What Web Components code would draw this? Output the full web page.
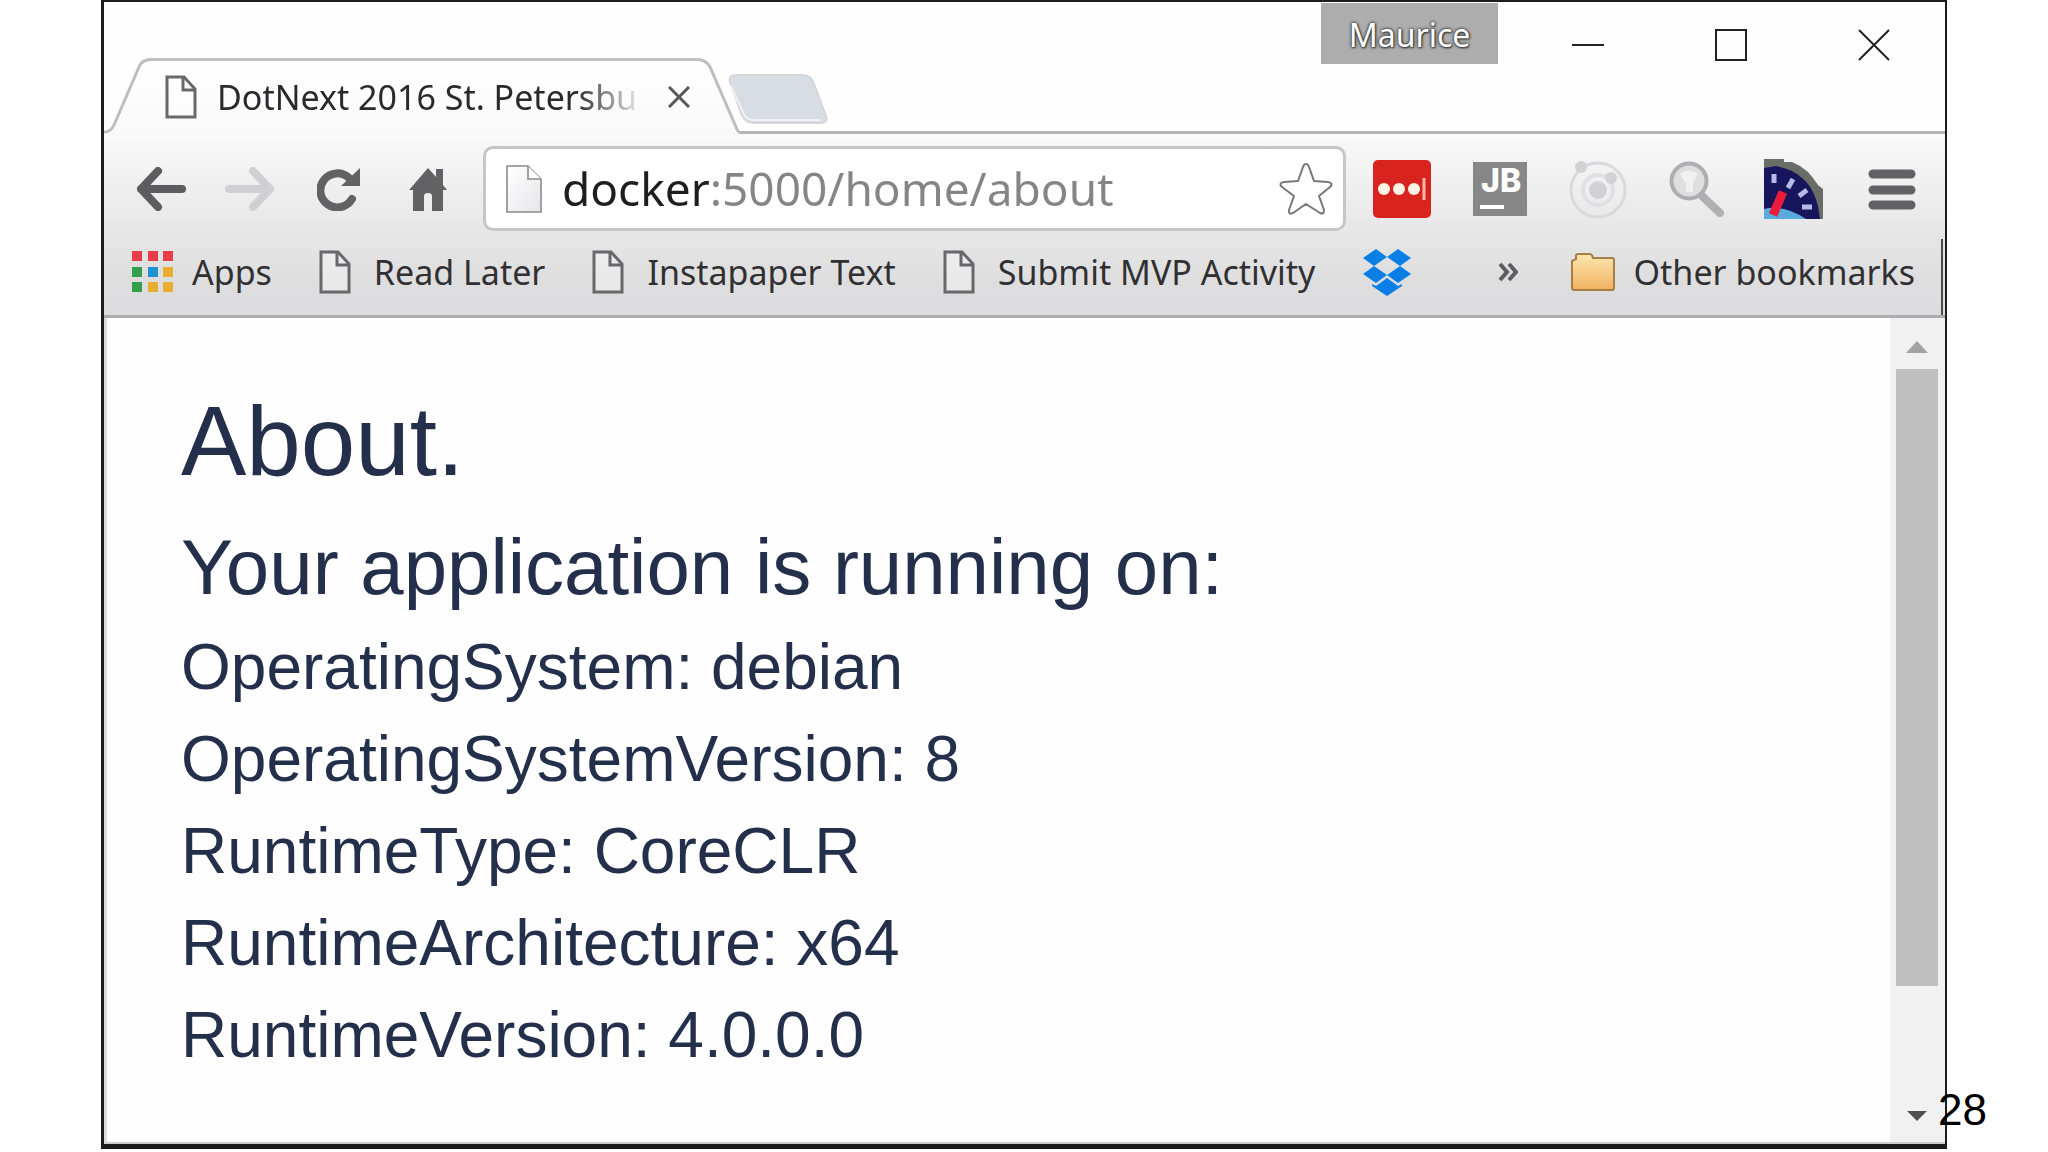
<!DOCTYPE html>
<html lang="en">
<head>
<meta charset="utf-8">
<title>About</title>
<style>
  body { margin: 0; background: #fff; font-family: "Noto Sans", "Open Sans", sans-serif; }
</style>
</head>
<body>
<slide-page number="28">
  <browser-window>
    <tab-strip slot="tabs" user="Maurice">
      <browser-tab>DotNext 2016 St. Petersbu</browser-tab>
    </tab-strip>
    <tool-bar slot="tools" url="docker:5000/home/about"></tool-bar>
    <bookmarks-bar slot="tools">
      <book-mark icon="apps">Apps</book-mark>
      <book-mark icon="page">Read Later</book-mark>
      <book-mark icon="page">Instapaper Text</book-mark>
      <book-mark icon="page">Submit MVP Activity</book-mark>
      <book-mark icon="dropbox" label="Dropbox"></book-mark>
      <book-mark slot="end" icon="folder">Other bookmarks</book-mark>
    </bookmarks-bar>
    <about-page></about-page>
    <scroll-track slot="scroll"></scroll-track>
  </browser-window>
</slide-page>

<script>
const ICONS = {
  page: [32, 44, '<path d="M2 2H19L30 14V42H2Z" fill="#fff" fill-opacity=".35" stroke="#68676b" stroke-width="3"/><path d="M18 2V15H30" fill="none" stroke="#68676b" stroke-width="3"/>'],
  blank: [36, 48, '<defs><linearGradient id="g" x1="0" y1="0" x2="1" y2="1"><stop offset="0" stop-color="#fff"/><stop offset="1" stop-color="#e6e6ea"/></linearGradient></defs><path d="M1 1H22L35 14V47H1Z" fill="url(#g)" stroke="#8b8b8f" stroke-width="1.6"/><path d="M22 1V14H35" fill="#fff" stroke="#8b8b8f" stroke-width="1.6"/>'],
  back: [50, 44, '<path d="M5 22H46M22 4L5 22L22 40" fill="none" stroke="#5d5d5f" stroke-width="8" stroke-linecap="round" stroke-linejoin="round"/>'],
  forward: [50, 44, '<path d="M4 22H45M28 4L45 22L28 40" fill="none" stroke="#d0d0d2" stroke-width="8" stroke-linecap="round" stroke-linejoin="round"/>'],
  reload: [44, 44, '<path d="M35 32A17 17 0 1 1 32 11" fill="none" stroke="#626264" stroke-width="8" stroke-linecap="round"/><path d="M43 1V19H24Z" fill="#626264"/>'],
  home: [38, 44, '<path d="M0 23L19 1L27 10V2H34V18L38 23H34V44H23V29Q23 26 19 26Q15 26 15 29V44H4V23Z" fill="#626264"/>'],
  star: [56, 56, '<path d="M28 3Q30 3 31 6L36 20L50 21Q56 22 52 26L41 35L46 49Q46 54 42 52L28 43L15 52Q10 54 11 49L16 35L4 26Q0 22 6 21L20 20L25 6Q26 3 28 3Z" fill="#fff" stroke="#77777a" stroke-width="2" stroke-linejoin="round"/>'],
  dots: [60, 60, '<rect x="1" y="1" width="58" height="58" rx="5" fill="#d9231f"/><g fill="#fff3e4"><circle cx="12" cy="30" r="6"/><circle cx="27" cy="30" r="6"/><circle cx="42" cy="30" r="6"/></g><path d="M52 19V41" stroke="#f9b8a8" stroke-width="3"/>'],
  jb: [54, 54, '<rect width="54" height="54" fill="#878787"/><text x="8" y="30" font-family="Inter" font-weight="800" font-size="32" fill="#fff">JB</text><path d="M7 45H31" stroke="#fff" stroke-width="4"/>'],
  orbit: [60, 60, '<g fill="none" stroke="#dadadc"><circle cx="30" cy="31" r="27" stroke-width="3"/><circle cx="30" cy="31" r="15" stroke-width="4" stroke="#e0e0e2"/></g><g fill="#d2d2d4"><circle cx="30" cy="31" r="9"/><circle cx="13" cy="8" r="6"/><circle cx="43" cy="19" r="6"/></g>'],
  lens: [56, 56, '<path d="M34 35L52 52" stroke="#b0b0b2" stroke-width="8" stroke-linecap="round"/><circle cx="21" cy="20" r="17.500" fill="#dedee0" stroke="#aeaeb0" stroke-width="4"/><path d="M12 13Q20 6 30 13L25 22V31H18V23Z" fill="#f1f1f2"/>'],
  gauge: [60, 60, '<path d="M0 0H20V3H28L36 7L44 13L49 19L54 26L59 30V60H0Z" fill="#6a6c66"/><path d="M0 9L12 7Q29 10 38 19Q53 31 56 60H0Z" fill="#17155c"/><path d="M0 50Q20 45 42 60H0Z" fill="#58abdc"/><path d="M9 56L19 33" stroke="#ec1c3a" stroke-width="9"/><path d="M10 15L10 24M24 29L29 20M35 37L43 31M38 48H48" stroke="#b8b9e6" stroke-width="5"/>'],
  menu: [48, 44, '<path d="M5 7H43M5 23H43M5 38H43" stroke="#626264" stroke-width="9" stroke-linecap="round"/>'],
  apps: [42, 42, '<g><path d="M0 0h10v10h-10zM16 0h10v10h-10zM31 0h10v10h-10z" fill="#e83c49"/><path d="M0 16h10v10h-10zM0 31h10v10h-10z" fill="#33a04c"/><path d="M16 16h10v10h-10z" fill="#1f92d2"/><path d="M31 16h10v10h-10zM16 31h10v10h-10zM31 31h10v10h-10z" fill="#e8ae2e"/></g>'],
  dropbox: [50, 48, '<path d="M14 1L25 9L12 18L1 10ZM36 1L49 10L38 18L25 9ZM1 26L12 18L25 27L14 35ZM49 26L38 18L25 27L36 35ZM10 36L14 38L25 30L36 38L40 36V38L25 48L10 38Z" fill="#0a7fe6"/>'],
  folder: [46, 40, '<defs><linearGradient id="f" x1="0" y1="0" x2="0" y2="1"><stop offset="0" stop-color="#fde6b0"/><stop offset="1" stop-color="#f0b25e"/></linearGradient></defs><path d="M2 9L6 7V4Q6 2 8 2H20Q22 2 23 6H42Q44 6 44 8V36Q44 38 42 38H4Q2 38 2 36Z" fill="url(#f)" stroke="#a57f45" stroke-width="2"/>'],
  more: [20, 20, '<path d="M2 2L9 10L2 18M11 2L18 10L11 18" fill="none" stroke="#5d5d5f" stroke-width="4"/>'],
  x: [22, 22, '<path d="M1 1L21 21M21 1L1 21" stroke="#58585a" stroke-width="3"/>'],
  min: [32, 32, '<path d="M0 16H32" stroke="#222" stroke-width="2"/>'],
  max: [32, 32, '<path d="M1 1H31V31H1Z" fill="none" stroke="#222" stroke-width="2"/>'],
  close: [32, 32, '<path d="M1 1L31 31M31 1L1 31" stroke="#222" stroke-width="2"/>'],
  up: [22, 12, '<path d="M0 12L11 0L22 12Z" fill="#a3a3a3"/>'],
  down: [20, 10, '<path d="M0 0H20L10 10Z" fill="#505050"/>']
};
const RESET = `
  button, a { font: inherit; color: inherit; background: none; border: 0; padding: 0; margin: 0; text-decoration: none;
    display: flex; align-items: center; justify-content: center; }`;

function define(name, render) {
  customElements.define(name, class extends HTMLElement {
    constructor() { super(); this.attachShadow({ mode: 'open' }); }
    connectedCallback() { this.shadowRoot.innerHTML = render(this); }
  });
}

define('ui-icon', el => {
  const [w, h, body] = ICONS[el.getAttribute('name')];
  return `<style>:host{display:block;flex:none}svg{display:block}</style>
    <svg width="${w}" height="${h}" viewBox="0 0 ${w} ${h}" aria-hidden="true">${body}</svg>`;
});

define('slide-page', el => `
  <style>
    :host { display: flex; flex-direction: column; min-height: 100vh; box-sizing: border-box; padding: 0 101px 3px; position: relative; }
    ::slotted(browser-window) { flex: 1; }
    .number { position: absolute; right: 61px; bottom: 17px; font: 44px/50px "Liberation Sans", Arial, sans-serif; color: #000; }
  </style>
  <slot></slot><span class="number">${el.getAttribute('number')}</span>`);

define('browser-window', () => `
  <style>
    :host { display: flex; flex-direction: column; border: solid #1c1b1d; border-width: 2px 2px 5px 3px; background: #fefefe; }
    .tools { background: linear-gradient(#f9f9fa, #dfdedf 80%, #dddcde); border-bottom: 3px solid #acabad; }
    .view { flex: 1; display: flex; border-left: 3px solid #dcdcdc; border-bottom: 2px solid #ccc; }
    .page { flex: 1; }
  </style>
  <slot name="tabs"></slot>
  <div class="tools"><slot name="tools"></slot></div>
  <div class="view"><main class="page"><slot></slot></main><slot name="scroll"></slot></div>`);

define('tab-strip', el => `
  <style>${RESET}
    :host { display: flex; height: 132px; }
    .tabs { display: flex; align-items: flex-end; }
    .rest { flex: 1; display: flex; justify-content: space-between; border-bottom: 3px solid #b4b3b6; }
    .new { align-self: flex-end; margin: 0 0 6px -12px; }
    .controls { display: flex; align-items: flex-start; }
    .controls button { width: 143px; height: 86px; }
    .controls .user { width: 177px; height: 61px; margin: 1px 18px 0 0; padding-top: 3px; box-sizing: border-box; background: #adadad; color: #fff;
      font-size: 32px; line-height: 44px; text-shadow: 0 0 3px #333, 0 0 3px #444, 1px 1px 2px #444; }
  </style>
  <div class="tabs"><slot></slot></div>
  <div class="rest">
    <button class="new" aria-label="New tab"><svg width="100" height="52" viewBox="0 0 102 52" preserveAspectRatio="none"><path d="M8 2H76Q84 2 87 9L100 43Q102 50 95 50H27Q18 50 14 42L2 9Q0 2 8 2Z" fill="#d8dde4" stroke="#d4d6da" stroke-width="2"/><path d="M3 13L16 41Q19 47 27 47H94" fill="none" stroke="#f0f2f5" stroke-width="2"/></svg></button>
    <div class="controls">
      <button class="user">${el.getAttribute('user')}</button>
      <button aria-label="Minimize"><ui-icon name="min"></ui-icon></button>
      <button aria-label="Maximize"><ui-icon name="max"></ui-icon></button>
      <button aria-label="Close"><ui-icon name="close"></ui-icon></button>
    </div>
  </div>`);

define('browser-tab', () => `
  <style>${RESET}
    :host { display: flex; height: 76px; color: #2a2a2c; }
    svg { display: block; }
    .body { display: flex; align-items: center; background: linear-gradient(#fff, #f9f9fa); border-top: 3px solid #c2c1c4; box-sizing: border-box; padding: 0 0 1px 7px; }
    .title { width: 428px; margin: 0 23px 0 20px; font-size: 34px; line-height: 48px; white-space: nowrap;
      -webkit-mask-image: linear-gradient(90deg, #000 84%, transparent); mask-image: linear-gradient(90deg, #000 84%, transparent); }
  </style>
  <svg width="54" height="76" viewBox="0 0 54 76"><defs><linearGradient id="a" x1="0" y1="0" x2="0" y2="1"><stop offset="0" stop-color="#fff"/><stop offset="1" stop-color="#f9f9fa"/></linearGradient></defs><path d="M0 76V74Q7 74 10 67L35 9Q38 1.500 47 1.500H54V76Z" fill="url(#a)"/><path d="M0 74Q7 74 10 67L35 9Q38 1.500 47 1.500H54" fill="none" stroke="#bebdc0" stroke-width="3"/></svg>
  <div class="body"><ui-icon name="page"></ui-icon><span class="title"><slot></slot></span><button aria-label="Close tab"><ui-icon name="x"></ui-icon></button></div>
  <svg width="50" height="76" viewBox="0 0 50 76"><defs><linearGradient id="b" x1="0" y1="0" x2="0" y2="1"><stop offset="0" stop-color="#fff"/><stop offset="1" stop-color="#f9f9fa"/></linearGradient></defs><path d="M0 1.500H7Q16 1.500 20 9L46 69Q48 74.500 50 74.500V76H0Z" fill="url(#b)"/><path d="M0 1.500H7Q16 1.500 20 9L46 69Q48 74.500 50 74.500" fill="none" stroke="#bebdc0" stroke-width="3"/></svg>`);

define('tool-bar', el => `
  <style>${RESET}
    :host { display: flex; align-items: center; padding: 12px 4px 8px 12px; }
    .nav, .ext { display: flex; }
    .nav button { width: 89px; height: 60px; }
    .ext button { width: 98px; height: 60px; }
    form { flex: 1; min-width: 0; display: flex; align-items: center; height: 85px; box-sizing: border-box; margin: 0 7px 0 11px;
      border: 3px solid #c6c5c9; border-radius: 10px; background: #fff; padding: 0 9px 0 20px; }
    input { flex: 1; min-width: 0; border: 0; padding: 0 0 2px; margin-left: 20px; outline: 0; font: 46px/66px "Noto Sans", "Open Sans", sans-serif; height: 66px;
      color: #858587; -webkit-text-fill-color: transparent;
      background: linear-gradient(90deg, #1e1e20 148px, #858587 148px); -webkit-background-clip: text; background-clip: text; }
  </style>
  <div class="nav">${['back', 'forward', 'reload', 'home'].map(n => `<button aria-label="${n}"><ui-icon name="${n}"></ui-icon></button>`).join('')}</div>
  <form><ui-icon name="blank"></ui-icon><input type="text" aria-label="Address" value="${el.getAttribute('url')}"><button type="button" aria-label="Bookmark this page"><ui-icon name="star"></ui-icon></button></form>
  <div class="ext">${['dots', 'jb', 'orbit', 'lens', 'gauge', 'menu'].map(n => `<button aria-label="${n}"><ui-icon name="${n}"></ui-icon></button>`).join('')}</div>`);

define('bookmarks-bar', () => `
  <style>${RESET}
    :host { display: flex; align-items: center; justify-content: space-between; height: 76px; box-sizing: border-box;
      margin-right: 2px; padding: 0 26px 10px 28px; border-right: 2px solid #4a494b; }
    .group { display: flex; align-items: center; gap: 47px; }
    .end { gap: 52px; }
  </style>
  <nav class="group"><slot></slot></nav>
  <div class="group end"><button aria-label="More bookmarks"><ui-icon name="more"></ui-icon></button><slot name="end"></slot></div>`);

define('book-mark', el => `
  <style>${RESET}
    :host { display: block; color: #303032; }
    a { gap: 18px; font-size: 34px; line-height: 48px; white-space: nowrap; }
    a.page { gap: 23px; }
  </style>
  <a href="#" class="${el.getAttribute('icon')}" aria-label="${el.getAttribute('label') || el.textContent}"><ui-icon name="${el.getAttribute('icon')}"></ui-icon>${el.textContent ? '<span><slot></slot></span>' : ''}</a>`);

define('about-page', () => `
  <style>
    :host { display: block; padding: 67px 74px 0; color: #242f4c; font-family: "Liberation Sans", Arial, sans-serif; }
    h1, h2, p { margin: 0; font-weight: 400; }
    h1 { font-size: 98px; line-height: 112px; margin-bottom: 24px; }
    h2 { font-size: 78px; line-height: 92px; margin-bottom: 8px; }
    p { font-size: 64px; line-height: 92px; }
  </style>
  <h1>About.</h1>
  <h2>Your application is running on:</h2>
  <p>OperatingSystem: debian</p>
  <p>OperatingSystemVersion: 8</p>
  <p>RuntimeType: CoreCLR</p>
  <p>RuntimeArchitecture: x64</p>
  <p>RuntimeVersion: 4.0.0.0</p>`);

define('scroll-track', () => `
  <style>${RESET}
    :host { display: flex; flex-direction: column; width: 55px; box-sizing: border-box; padding: 0 7px 4px 6px; background: #f1f1f2; }
    button { height: 51px; padding-top: 7px; box-sizing: border-box; }
    .lane { flex: 1; }
    .thumb { height: 86%; background: #bfbfc0; }
  </style>
  <button aria-label="Scroll up"><ui-icon name="up"></ui-icon></button>
  <div class="lane"><div class="thumb"></div></div>
  <button aria-label="Scroll down"><ui-icon name="down"></ui-icon></button>`);
</script>
</body>
</html>
